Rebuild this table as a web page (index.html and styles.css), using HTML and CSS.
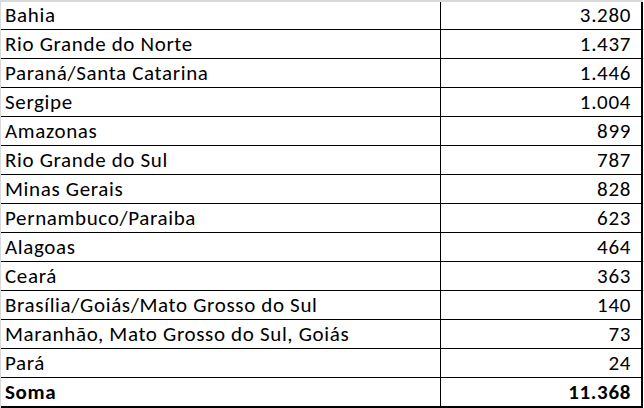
FILE: index.html
```html
<!DOCTYPE html>
<html lang="pt">
<head>
<meta charset="utf-8">
<link rel="stylesheet" href="styles.css">
</head>
<body>
<div class="sheet">
  <div class="row first"><div class="name">Bahia</div><div class="val">3.280</div></div>
  <div class="row"><div class="name">Rio Grande do Norte</div><div class="val">1.437</div></div>
  <div class="row"><div class="name">Paraná/Santa Catarina</div><div class="val">1.446</div></div>
  <div class="row"><div class="name">Sergipe</div><div class="val">1.004</div></div>
  <div class="row"><div class="name">Amazonas</div><div class="val">899</div></div>
  <div class="row"><div class="name">Rio Grande do Sul</div><div class="val">787</div></div>
  <div class="row"><div class="name">Minas Gerais</div><div class="val">828</div></div>
  <div class="row"><div class="name">Pernambuco/Paraiba</div><div class="val">623</div></div>
  <div class="row"><div class="name">Alagoas</div><div class="val">464</div></div>
  <div class="row"><div class="name">Ceará</div><div class="val">363</div></div>
  <div class="row"><div class="name">Brasília/Goiás/Mato Grosso do Sul</div><div class="val">140</div></div>
  <div class="row"><div class="name">Maranhão, Mato Grosso do Sul, Goiás</div><div class="val">73</div></div>
  <div class="row"><div class="name">Pará</div><div class="val">24</div></div>
  <div class="row total"><div class="name">Soma</div><div class="val">11.368</div></div>
</div>
</body>
</html>
```
FILE: styles.css
```css
html, body {
  margin: 0;
  padding: 0;
  background: #fff;
}
.sheet {
  width: 642px;
  border-top: 2px solid #d9d9d9;
  border-left: 1px solid #d9d9d9;
  font-family: "Carlito", "Lato", "Liberation Sans", sans-serif;
  font-size: 21px;
  letter-spacing: 0.65px;
  color: #000;
}
.row {
  display: grid;
  grid-template-columns: 440px 199px;
  height: 28px;
  border-bottom: 1px solid #000;
  border-right: 2px solid #000;
}
.row.first {
  height: 27px;
}
.row.total {
  height: 28px;
  border-bottom: 3px solid #000;
  font-weight: bold;
}
.name, .val {
  line-height: 28px;
  white-space: nowrap;
  overflow: hidden;
}
.name {
  padding-left: 4px;
  border-right: 1px solid #000;
}
.val {
  text-align: right;
  padding-right: 9px;
}
.first .name, .first .val {
  line-height: 27px;
}
```
